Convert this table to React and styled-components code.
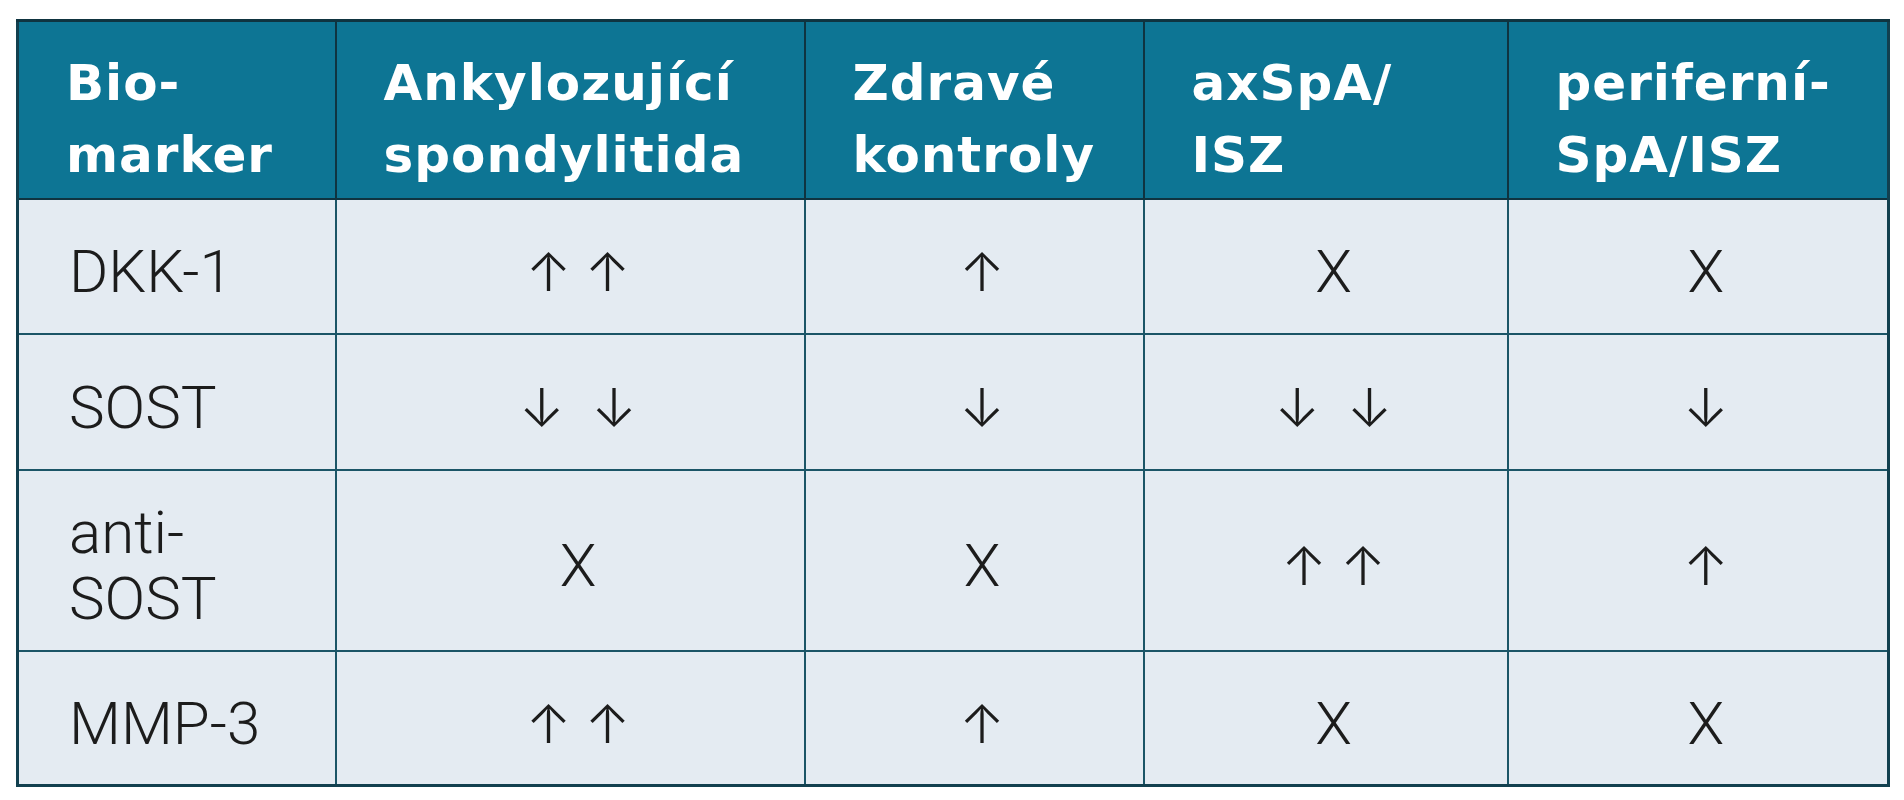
import React from "react"
import styled, { createGlobalStyle } from "styled-components"

const GlobalStyle = createGlobalStyle`
  html, body {
    margin: 0;
    padding: 0;
    background: #ffffff;
  }
`

const columns = [
  { title: ["Bio-", "marker"], width: 318 },
  { title: ["Ankylozující", "spondylitida"], width: 469 },
  { title: ["Zdravé", "kontroly"], width: 339 },
  { title: ["axSpA/", "ISZ"], width: 364 },
  { title: ["periferní-", "SpA/ISZ"], width: 381 },
]

const rows = [
  { name: ["DKK-1"], values: ["↑↑", "↑", "X", "X"], height: 135 },
  { name: ["SOST"], values: ["↓ ↓", "↓", "↓ ↓", "↓"], height: 136 },
  { name: ["anti-", "SOST"], values: ["X", "X", "↑↑", "↑"], height: 181 },
  { name: ["MMP-3"], values: ["↑↑", "↑", "X", "X"], height: 135 },
]

const App = () => {
  return (
    <Page>
      <GlobalStyle />
      <Table>
        <colgroup>
          {columns.map((c, i) => (
            <col key={i} style={{ width: c.width }} />
          ))}
        </colgroup>
        <thead>
          <HeadRow>
            {columns.map((c, i) => (
              <HeadCell key={i}>
                {c.title[0]}
                <br />
                {c.title[1]}
              </HeadCell>
            ))}
          </HeadRow>
        </thead>
        <tbody>
          {rows.map((r, i) => (
            <BodyRow key={i} $height={r.height}>
              <NameCell>
                {r.name.map((line, j) => (
                  <Line key={j}>{line}</Line>
                ))}
              </NameCell>
              {r.values.map((v, j) => (
                <ValueCell key={j}>
                  {v === "X" ? <Cross>{v}</Cross> : <Arrows>{v}</Arrows>}
                </ValueCell>
              ))}
            </BodyRow>
          ))}
        </tbody>
      </Table>
    </Page>
  )
}

export default App

const Page = styled.div`
  padding: 19px 0 0 16px;
`

const Table = styled.table`
  border-collapse: collapse;
  table-layout: fixed;
  width: 1872px;
  border: 3px solid #12404f;
`

const HeadRow = styled.tr`
  height: 178px;
  background: #0d7594;
`

const HeadCell = styled.th`
  border: 2px solid #0f3440;
  border-top-width: 3px;
  padding: 25px 0 0 47px;
  vertical-align: top;
  text-align: left;
  color: #ffffff;
  font-family: "DejaVu Sans", "Open Sans", sans-serif;
  font-weight: 700;
  font-size: 50px;
  line-height: 72px;
  letter-spacing: 1px;
  white-space: nowrap;
`

const BodyRow = styled.tr`
  height: ${p => p.$height}px;
  background: #e4ebf2;
`

const NameCell = styled.td`
  border: 2.5px solid #1b5567;
  padding: 12px 0 0 50px;
  vertical-align: middle;
  text-align: left;
  color: #1c1c1c;
  font-family: Roboto, "Noto Sans", sans-serif;
  font-weight: 300;
  font-size: 60px;
  line-height: 66px;
`

const Line = styled.div``

const ValueCell = styled.td`
  border: 2.5px solid #1b5567;
  padding: 12px 0 0 16px;
  vertical-align: middle;
  text-align: center;
  color: #1c1c1c;
`

const Cross = styled.span`
  font-family: Roboto, "Noto Sans", sans-serif;
  font-weight: 300;
  font-size: 60px;
  line-height: 66px;
`

const Arrows = styled.span`
  font-family: Inter, "Noto Sans CJK SC", sans-serif;
  font-weight: 300;
  font-size: 54px;
  line-height: 66px;
  letter-spacing: 14px;
  word-spacing: -16px;
  margin-right: -14px;
  white-space: pre;
`
